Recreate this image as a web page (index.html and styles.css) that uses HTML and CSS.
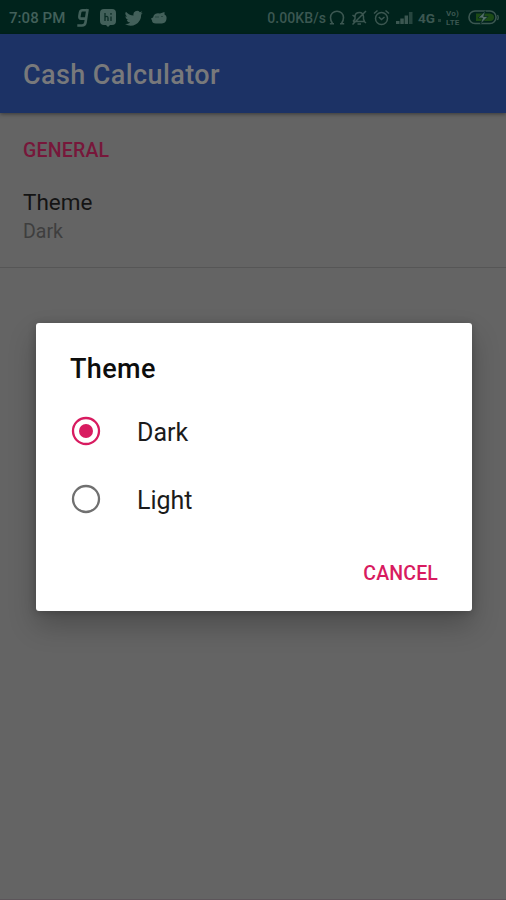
FILE: index.html
```html
<!DOCTYPE html>
<html lang="en">
<head>
<meta charset="utf-8">
<title>Cash Calculator</title>
<link rel="stylesheet" href="styles.css">
</head>
<body>
<div class="screen">
  <header class="status">
    <div class="status-left">
      <span class="clock">7:08 PM</span>
      <svg class="i-g" width="14" height="20" viewBox="0 0 14 20" fill="none" stroke="currentColor" stroke-width="2.6"><path d="M11.3 2.2H6.5Q4.5 2.2 4 4.5L3.4 8Q3 10.6 5 10.6H9.5M11.6 1L9.5 14.5Q9 17.500 6 17.500H1.3"/></svg>
      <svg class="i-hi" width="16" height="18" viewBox="0 0 16 18"><path fill="currentColor" d="M4 0H12Q16 0 16 4V12Q16 16 12 16H10L8 18L6 16H4Q0 16 0 12V4Q0 0 4 0Z"/><path fill="none" stroke="#00231c" stroke-width="1.300" opacity=".85" d="M5 4V12M5 8Q8 6.500 8 9V12M11 7.500V12M11 4V5.700"/></svg>
      <svg class="i-bird" width="18" height="18" viewBox="0 0 24 24" fill="currentColor"><path d="M23.6 4.900a10 10 0 0 1-2.800.8 4.900 4.900 0 0 0 2.100-2.700 10 10 0 0 1-3.100 1.200 4.900 4.900 0 0 0-8.400 4.500A14 14 0 0 1 1.300 3.500a4.900 4.900 0 0 0 1.500 6.600 4.900 4.900 0 0 1-2.200-.6c0 2.300 1.600 4.400 3.900 4.900a5 5 0 0 1-2.200.1 4.900 4.900 0 0 0 4.600 3.400A9.900 9.900 0 0 1 0 19.900a14 14 0 0 0 21.500-12.400 10 10 0 0 0 2.100-2.600z"/></svg>
      <svg class="i-bot" width="17" height="14" viewBox="0 0 17 14"><path fill="currentColor" d="M3 4Q5 1.500 9 2.500L13.500 1L13.500 3.500Q16 4.500 15.500 8Q15 12 11 12.500H5Q1 12.500 1 9.500L0 7.500L2 6.500Z"/><path d="M4 6H8M10 5.500H12" stroke="#00231c" opacity=".4"/></svg>
    </div>
    <div class="status-right">
      <span class="rate">0.00KB/s</span>
      <svg class="i-head" width="16" height="16" viewBox="0 0 16 16" fill="none" stroke="currentColor" stroke-width="1.600"><path d="M3.500 13.500Q1.500 11 1.500 7.500A6.500 6.300 0 0 1 14.500 7.500Q14.500 11 12.500 13.500M0.800 13.800H5M11 13.800H15.200"/></svg>
      <svg class="i-mute" width="16" height="16" viewBox="0 0 16 16" fill="none" stroke="currentColor" stroke-width="1.500"><path d="M2 11.500H13.500L12.500 9V6.500Q12 2.500 8.500 2.500Q4.500 2.500 4 6V9L2 11.500M6.500 14H10M15 1L1.500 14.500M1.500 5L4 7M12.500 11L15 13"/></svg>
      <svg class="i-alarm" width="17" height="17" viewBox="0 0 17 17" fill="none" stroke="currentColor" stroke-width="1.500"><circle cx="8.500" cy="9.500" r="6"/><path d="M1 4.500L4.500 1.500M12.500 1.500L16 4.500M5.800 8L8.500 10.500L11.500 8"/></svg>
      <svg class="i-signal" width="17" height="13" viewBox="0 0 17 13" fill="currentColor"><path d="M0 10H3.500V13H0ZM4.300 7.500H7.800V13H4.300ZM8.600 4.500H12V13H8.600Z"/><path opacity=".65" d="M12.900 1H16.500V13H12.900Z"/></svg>
      <span class="net">4G</span>
      <span class="dot"></span>
      <span class="volte"><span>Vo)</span><span>LTE</span></span>
      <svg class="i-batt" width="31" height="15" viewBox="0 0 31 15"><rect x="1" y="1" width="27" height="12.500" rx="6" fill="none" stroke="currentColor" stroke-width="1.600"/><path d="M29.500 5Q31 7.300 29.500 10" fill="none" stroke="currentColor" stroke-width="1.300"/><path d="M8 3.500H22Q26 4 26 7.300Q26 11 22 11H8Z" fill="#1c4b16"/><path d="M17.500 1L10 8H14.500L12.500 14L20 6.500H15.700Z" fill="#56716a" stroke="#00231c" stroke-width=".7"/></svg>
    </div>
  </header>
  <div class="appbar">Cash Calculator</div>
  <main class="prefs">
    <div class="category">GENERAL</div>
    <div class="pref">
      <div class="pref-title">Theme</div>
      <div class="pref-value">Dark</div>
    </div>
  </main>
  <section class="dialog" role="dialog">
    <h2 class="dialog-title">Theme</h2>
    <div class="option">
      <svg class="radio radio-on" width="30" height="30" viewBox="0 0 30 30"><circle cx="15" cy="15" r="13" fill="none" stroke="currentColor" stroke-width="2.300"/><circle cx="15" cy="15" r="7" fill="currentColor"/></svg>
      <span>Dark</span>
    </div>
    <div class="option">
      <svg class="radio" width="30" height="30" viewBox="0 0 30 30"><circle cx="15" cy="15" r="13" fill="none" stroke="currentColor" stroke-width="2.300"/></svg>
      <span>Light</span>
    </div>
    <div class="actions"><span class="cancel">CANCEL</span></div>
  </section>
</div>
</body>
</html>
```

FILE: styles.css
```css
* { box-sizing: border-box; }
body { margin: 0; font-family: Roboto, "Liberation Sans", sans-serif; }
.screen {
  position: relative;
  width: 506px;
  height: 900px;
  overflow: hidden;
  background: #646464;
  border-bottom: 1px solid #5c555a;
}
.status {
  display: flex;
  justify-content: space-between;
  height: 34px;
  padding: 0 7px 0 9px;
  background: #00231c;
  color: #42605a;
}
.status-left, .status-right { display: flex; align-items: center; height: 35px; }
.status-right { color: #3b5751; }
.clock { font-size: 15px; font-weight: 500; letter-spacing: 0.05px; }
.i-g { margin-left: 11px; }
.i-hi { margin-left: 10px; }
.i-bird { margin-left: 9px; }
.i-bot { margin-left: 8px; }
.rate { font-size: 14px; font-weight: 500; letter-spacing: 0.1px; }
.i-head { margin-left: 3px; }
.i-mute { margin-left: 6px; }
.i-alarm { margin-left: 6px; }
.i-signal { margin-left: 6px; }
.net { margin-left: 5px; font-size: 13.5px; font-weight: 700; }
.dot { width: 3px; height: 3px; margin: 6px 0 0 3px; background: #24413a; }
.volte {
  display: flex;
  flex-direction: column;
  width: 16px;
  margin-left: 5px;
  font-size: 8px;
  line-height: 9px;
  font-weight: 700;
  letter-spacing: 0.2px;
}
.i-batt { margin-left: 6px; }
.appbar {
  position: relative;
  height: 79px;
  padding-left: 23px;
  background: #1c3265;
  color: #78797b;
  font-size: 27px;
  line-height: 82px;
  font-weight: 500;
  letter-spacing: 0.4px;
  box-shadow: 0 1px 4px rgba(0, 0, 0, 0.45);
}
.prefs { padding-top: 26px; }
.category {
  padding-left: 23px;
  color: #77173a;
  font-size: 19.5px;
  line-height: 24px;
  font-weight: 500;
  letter-spacing: 0.2px;
}
.pref {
  height: 105px;
  padding: 25px 0 0 23px;
  border-bottom: 1px solid #565656;
}
.pref-title { color: #141414; font-size: 22.5px; line-height: 28px; }
.pref-value { padding-top: 1px; color: #3e3e3e; font-size: 19.5px; line-height: 29px; }
.dialog {
  position: absolute;
  left: 36px;
  top: 323px;
  width: 436px;
  height: 288px;
  padding: 30px 34px 0;
  border-radius: 3px;
  background: #fff;
  color: #1b1b1b;
  box-shadow: 0 14px 28px rgba(0, 0, 0, 0.24), 0 1px 8px rgba(0, 0, 0, 0.2);
}
.dialog-title { margin: 0 0 13px; color: #0d0d0d; font-size: 27px; line-height: 32px; font-weight: 500; letter-spacing: 0.4px; }
.option { display: flex; align-items: center; height: 68px; font-size: 25px; }
.radio { margin: -2px 36px 0 1px; color: #707070; }
.radio-on { color: #d81b60; }
.actions { display: flex; justify-content: flex-end; padding-top: 28px; }
.cancel { color: #d81b60; font-size: 19.5px; line-height: 24px; font-weight: 500; letter-spacing: 0.15px; }
```
